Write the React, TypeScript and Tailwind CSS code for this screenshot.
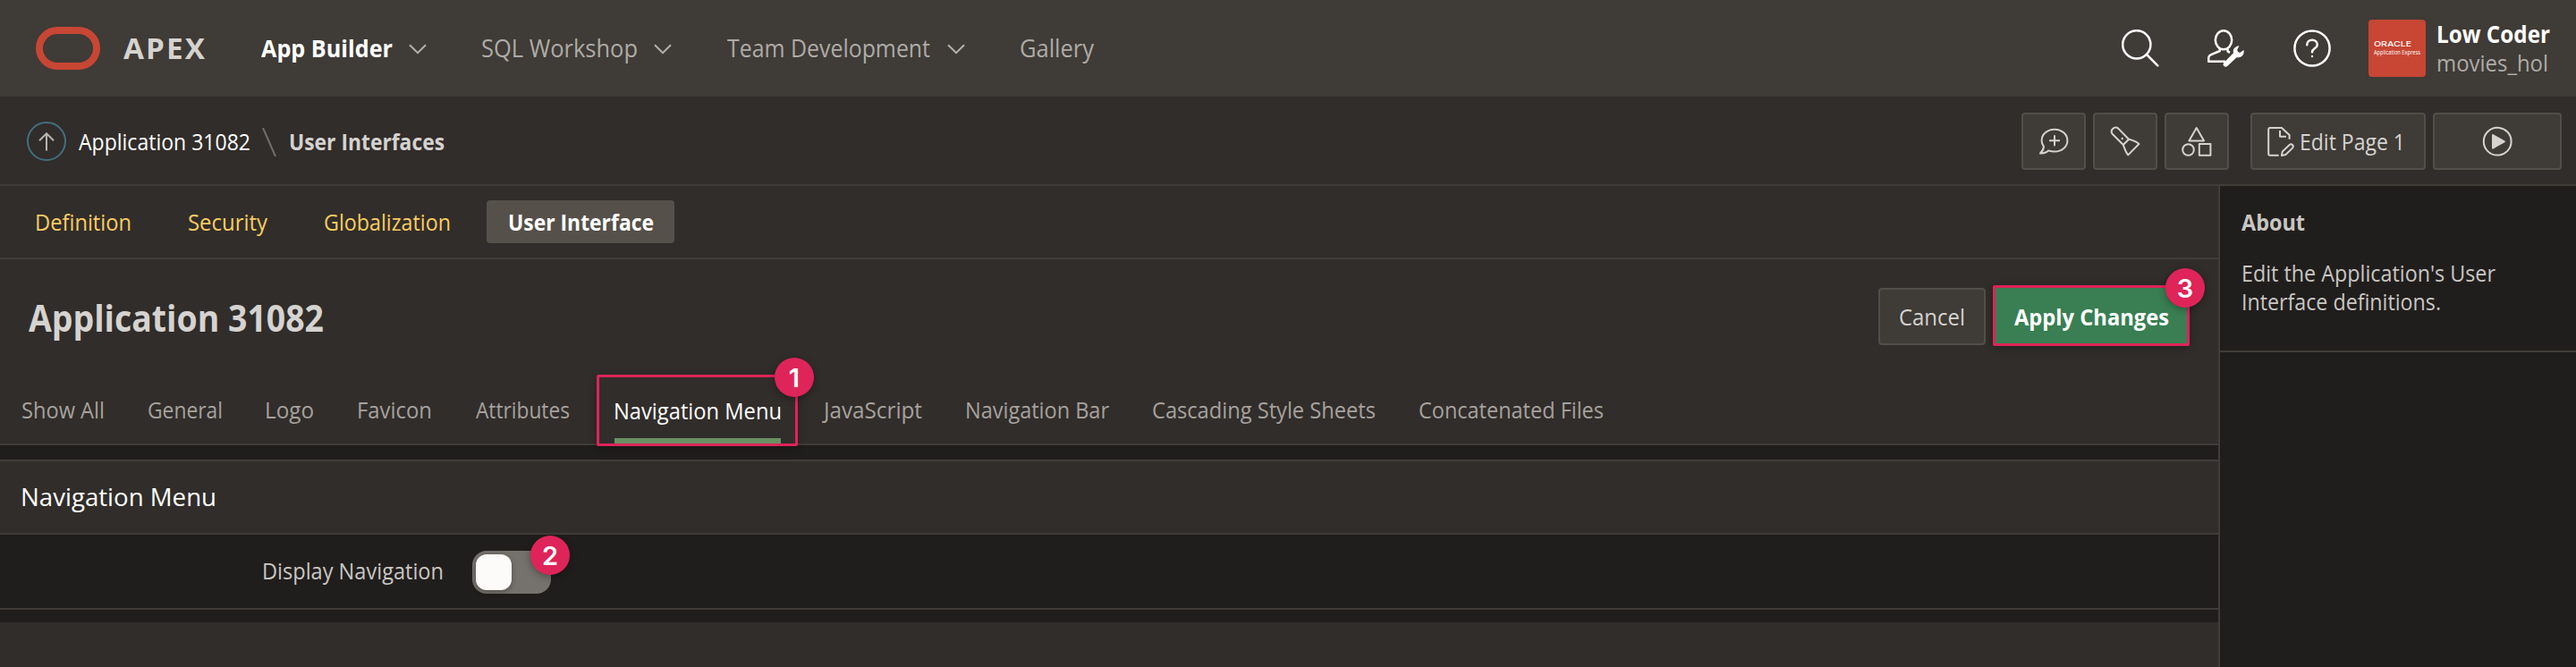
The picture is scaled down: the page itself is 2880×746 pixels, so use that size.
import { useLayoutEffect, useRef, useState } from "react";
import type { ReactNode } from "react";

/* A single line of text condensed or widened to fill the width of its box, less a pixel on each side. */
function Line({ className, children }: { className: string; children: ReactNode }) {
  const box = useRef<HTMLSpanElement>(null);
  const text = useRef<HTMLSpanElement>(null);
  const [scale, setScale] = useState(1);
  useLayoutEffect(() => {
    if (box.current && text.current && text.current.offsetWidth > 0) {
      setScale((box.current.offsetWidth - 2) / text.current.getBoundingClientRect().width);
    }
  }, []);
  return (
    <span ref={box} className={`block shrink-0 whitespace-nowrap ${className}`}>
      <span ref={text} className="ml-px inline-block origin-left" style={{ transform: `scaleX(${scale})` }}>
        {children}
      </span>
    </span>
  );
}

function Chevron({ className }: { className: string }) {
  return (
    <svg viewBox="0 0 20 12" className={`h-3 w-5 shrink-0 fill-none stroke-[#b5b2ae] stroke-2 ${className}`}>
      <path d="M1 1.2 10 10.2 19 1.2" />
    </svg>
  );
}

function Badge({ className, children }: { className: string; children: ReactNode }) {
  return (
    <span
      className={`absolute z-10 flex size-11 items-center justify-center rounded-full bg-[#de2459] font-['Inter',sans-serif] text-[29px] leading-none font-semibold text-white shadow-[0_2px_8px_rgba(0,0,0,0.35)] ${className}`}
    >
      {children}
    </span>
  );
}

function IconButton({ className, label, children }: { className: string; label: string; children: ReactNode }) {
  return (
    <button
      aria-label={label}
      className={`flex h-16 shrink-0 items-center justify-center rounded-[4px] border-2 border-[#524e48] bg-[#3f3b36] ${className}`}
    >
      {children}
    </button>
  );
}

const iconClass = "h-8 w-8 overflow-visible fill-none stroke-[#d5d3d0] stroke-2";

function Header() {
  return (
    <header className="flex h-[108px] shrink-0 items-center bg-[#3f3b36] pl-10 text-[27px] text-[#aeaba7]">
      <div className="h-12 w-[72px] shrink-0 rounded-[24px] border-[8.5px] border-[#c74634]" />
      <Line className="ml-[25px] w-[95px] text-[32px] font-bold tracking-[2px] text-[#d5d3d0]">APEX</Line>
      <Line className="ml-[59px] w-[149px] font-bold text-white">App Builder</Line>
      <Chevron className="ml-[17px] mt-px" />
      <Line className="ml-[60px] w-[177px]">SQL Workshop</Line>
      <Chevron className="ml-[17px] mt-px" />
      <Line className="ml-[61px] w-[229px]">Team Development</Line>
      <Chevron className="ml-[18px] mt-px" />
      <Line className="ml-[60px] w-[85px]">Gallery</Line>
      <div className="ml-auto flex items-center">
        <svg viewBox="0 0 42 42" className="size-[42px] fill-none stroke-white stroke-[2.5]" strokeLinecap="round">
          <circle cx="16.8" cy="16.8" r="15.6" />
          <path d="M28 28 40.3 40.3" />
        </svg>
        <svg viewBox="0 0 42 42" className="ml-[54px] size-[42px] fill-none stroke-white stroke-[2.5]" strokeLinejoin="round">
          <ellipse cx="18" cy="11.8" rx="9.2" ry="10.5" />
          <path d="M13.8 21.2V24L4 28.2C2 29.1 1.2 30.2 1.2 32V35.8H20" />
          <path d="M22.6 21.4V24.4L25 25.8" />
          <path
            className="fill-white stroke-none"
            d="M18.2 37.2 29 26.2C28 22.5 30.2 18.8 35.5 18.2L33.3 22.4C33 24.5 34.8 26 36.6 25.8L40.5 23C41.6 28 37.6 32 32.6 31.2L22.2 41C19.5 43 16 40 18.2 37.2Z"
          />
        </svg>
        <svg viewBox="0 0 42 42" className="ml-[54px] size-[42px] fill-none stroke-white stroke-[2.5]" strokeLinecap="round">
          <circle cx="21" cy="21" r="19.6" />
          <path d="M15.2 17.2C15.2 13.8 17.8 11.7 21 11.7S26.8 13.8 26.8 17C26.8 21 21 21 21 25.2" />
          <circle cx="21" cy="30" r="1.2" className="fill-white stroke-none" />
        </svg>
        <div className="ml-[42px] flex size-16 flex-col rounded-[4px] bg-[#c74634] pt-[23px] pl-[5px] text-white">
          <Line className="w-11 font-['Inter',sans-serif] text-[8px] leading-[9px] font-medium">ORACLE</Line>
          <Line className="w-[54px] text-[7.5px] leading-[8px]">Application Express</Line>
        </div>
        <div className="ml-[11px] mr-7 w-[129px]">
          <Line className="w-[129px] leading-[33px] font-bold text-white">Low Coder</Line>
          <Line className="w-[127px] text-[26px] leading-[33px] text-[#aeaba7]">movies_hol</Line>
        </div>
      </div>
    </header>
  );
}

function Toolbar() {
  return (
    <div className="flex h-[100px] shrink-0 items-center border-b-2 border-[#403c38] pt-0.5 pl-[30px] pr-4 text-[25px]">
      <button
        aria-label="Up"
        className="flex size-11 shrink-0 items-center justify-center rounded-full border-2 border-[#42707e]"
      >
        <svg viewBox="0 0 18 21" className="h-[21px] w-[18px] fill-none stroke-[#b8b5b1] stroke-2">
          <path d="M9 20.5V1.5M1 9.3 9 1.3 17 9.3" />
        </svg>
      </button>
      <Line className="ml-[13px] mt-0.5 w-[194px] text-white">Application 31082</Line>
      <svg viewBox="0 0 16 32" className="ml-3 mt-0.5 h-8 w-4 fill-none stroke-[#726e69] stroke-2">
        <path d="M1 0 15 32" />
      </svg>
      <Line className="ml-[13px] mt-0.5 w-[176px] font-bold text-[#d5d3d0]">User Interfaces</Line>
      <div className="ml-auto flex gap-2">
        <IconButton label="Feedback" className="w-[72px]">
          <svg viewBox="0 0 32 32" className={iconClass} strokeLinejoin="round">
            <path d="M5 22C3.5 20 2.6 17.8 2.6 15.3 2.6 8.2 9 2.7 17 2.7S31.4 8.2 31.4 15.2 25 27.6 17 27.6C14.5 27.6 12.2 27.2 10.2 26.4 7.5 28.8 4 29.8 1 29.5 3.2 27.5 4.6 25 5 22Z" />
            <path d="M17 9.3V21.3M11 15.3H23" />
          </svg>
        </IconButton>
        <IconButton label="Search page" className="w-[72px]">
          <svg viewBox="0 0 32 32" className={iconClass} strokeLinejoin="round">
            <path d="M13.8 20 1.8 8C-1.6 4 4-1.8 8.2 1.6L20 13.8Z" />
            <path d="M20 13.8C23.8 14.8 28.4 16 31.4 19L19.2 31.4C16.4 28 15.2 24 13.8 20" />
            <circle cx="12.7" cy="13" r="1.2" className="fill-[#d5d3d0] stroke-none" />
          </svg>
        </IconButton>
        <IconButton label="Shared components" className="w-[72px]">
          <svg viewBox="0 0 32 32" className={iconClass} strokeLinejoin="round">
            <path d="M15.7 1 7.4 15.4H24.1Z" />
            <circle cx="6.5" cy="25.5" r="6.3" />
            <path d="M18.8 19H31.4V31.8H18.8Z" />
          </svg>
        </IconButton>
        <IconButton label="Edit Page 1" className="ml-4 w-[196px]">
          <svg viewBox="0 0 30 33" className="h-[33px] w-[30px] overflow-visible fill-none stroke-[#d5d3d0] stroke-2" strokeLinejoin="round">
            <path d="M12.7 31.8H3C1.8 31.8 1.2 31.2 1.2 30V2.8C1.2 1.6 1.8 1 3 1H16L24.6 9V13.7" />
            <path d="M14 4V10.7H21" />
            <path d="M15.9 32 16.8 27.4 24.4 20.2C27 18 30.2 20.8 28 23.6L20.4 31Z" />
          </svg>
          <Line className="ml-[5px] mr-[3px] mt-0.5 w-[120px] font-medium text-[#d5d3d0]">Edit Page 1</Line>
        </IconButton>
        <IconButton label="Run" className="w-36">
          <svg viewBox="0 0 32 32" className={iconClass} strokeLinejoin="round">
            <circle cx="16.2" cy="16.2" r="15.4" />
            <path className="fill-[#d5d3d0]" d="M11 9 23.8 16.3 11 23.6Z" />
          </svg>
        </IconButton>
      </div>
    </div>
  );
}

function PageTabs() {
  return (
    <nav className="flex h-[82px] shrink-0 items-center border-b-2 border-[#403c38] pl-[38px] text-[25px] text-[#facd62]">
      <Line className="mt-0.5 w-[110px]">Definition</Line>
      <Line className="ml-[61px] mt-0.5 w-[91px]">Security</Line>
      <Line className="ml-[61px] mt-0.5 w-[144px]">Globalization</Line>
      <div className="ml-[39px] flex h-12 w-[210px] items-center justify-center rounded-[4px] bg-[#55504a] pt-0.5 text-white">
        <Line className="w-[165px] font-bold">User Interface</Line>
      </div>
    </nav>
  );
}

function TitleBar() {
  return (
    <div className="flex h-[128px] shrink-0 items-center pl-[31px] pr-8">
      <Line className="mt-[3px] w-[332px] text-[41px] font-bold text-[#d5d3d0]">Application 31082</Line>
      <div className="ml-auto flex items-center gap-2">
        <button className="flex h-16 w-[120px] items-center justify-center rounded-[4px] border-2 border-[#524e48] bg-[#3f3b36] pt-0.5 text-[25px] text-[#d5d3d0]">
          <Line className="w-[76px]">Cancel</Line>
        </button>
        <button className="relative -mt-0.5 flex h-[68px] w-[220px] items-center justify-center rounded-[2px] border-[3px] border-[#de2459] bg-[#397f53] pt-1 text-[25px] font-bold text-white shadow-[0_2px_10px_rgba(0,0,0,0.3)]">
          <Line className="w-[175px]">Apply Changes</Line>
          <Badge className="-top-[22px] -right-5">3</Badge>
        </button>
      </div>
    </div>
  );
}

function SectionTabs() {
  return (
    <nav className="flex h-20 shrink-0 items-center border-b-2 border-[#403c38] pt-1 pl-[23px] text-[25px] text-[#a5a29e]">
      <Line className="w-[95px]">Show All</Line>
      <Line className="ml-[46px] w-[86px]">General</Line>
      <Line className="ml-[45px] w-[57px]">Logo</Line>
      <Line className="ml-[46px] w-[86px]">Favicon</Line>
      <Line className="ml-[47px] w-[107px]">Attributes</Line>
      <div className="relative ml-[29px] flex h-20 w-[225px] shrink-0 justify-center rounded-[2px] border-[3px] border-[#de2459] pt-[19px] text-white shadow-[0_2px_10px_rgba(0,0,0,0.3)]">
        <div className="flex w-[186px] flex-col justify-between">
          <Line className="-ml-0.5 w-[190px]">Navigation Menu</Line>
          <div className="h-[6px] bg-[#699063]" />
        </div>
        <Badge className="-top-[22px] -right-[21px]">1</Badge>
      </div>
      <Line className="ml-[28px] w-[112px]">JavaScript</Line>
      <Line className="ml-[46px] w-[163px]">Navigation Bar</Line>
      <Line className="ml-[46px] w-[252px]">Cascading Style Sheets</Line>
      <Line className="ml-[46px] w-[209px]">Concatenated Files</Line>
    </nav>
  );
}

function NavigationSection() {
  return (
    <section className="flex h-[198px] shrink-0 flex-col bg-[#201e1c] pt-4">
      <div className="flex h-[84px] shrink-0 items-center border-y-2 border-[#403c38] bg-[#312d2a] pb-0.5 pl-[22px]">
        <Line className="w-[221px] text-[28px] text-white">Navigation Menu</Line>
      </div>
      <div className="flex h-[84px] shrink-0 items-center border-b-2 border-[#403c38] pl-[292px] text-[25px] text-[#c9c6c3]">
        <Line className="w-[205px]">Display Navigation</Line>
        <div className="relative ml-[31px] mt-0.5 flex h-12 w-[88px] items-center rounded-[16px] bg-[#75716c] pl-1">
          <div className="size-10 rounded-[12px] bg-[#fcfbfa] shadow-[0_2px_6px_rgba(0,0,0,0.3)]" />
          <Badge className="-top-[17px] -right-[21px]">2</Badge>
        </div>
      </div>
    </section>
  );
}

function AboutPanel() {
  return (
    <aside className="w-[400px] shrink-0 border-l-2 border-[#403c38] bg-[#201e1c] text-[25px] leading-8 text-[#c9c6c3]">
      <div className="h-[186px] border-b-2 border-[#403c38] pl-[23px] pt-6">
        <Line className="w-[73px] font-bold">About</Line>
        <div className="mt-[25px]">
          <Line className="w-[286px]">Edit the Application's User</Line>
          <Line className="w-[225px]">Interface definitions.</Line>
        </div>
      </div>
    </aside>
  );
}

export default function App() {
  return (
    <div className="flex h-[746px] w-[2880px] flex-col overflow-hidden bg-[#312d2a] font-['Open_Sans',sans-serif] font-medium">
      <Header />
      <Toolbar />
      <div className="flex min-h-0 flex-1">
        <main className="flex w-[2480px] shrink-0 flex-col">
          <PageTabs />
          <TitleBar />
          <SectionTabs />
          <NavigationSection />
        </main>
        <AboutPanel />
      </div>
    </div>
  );
}
